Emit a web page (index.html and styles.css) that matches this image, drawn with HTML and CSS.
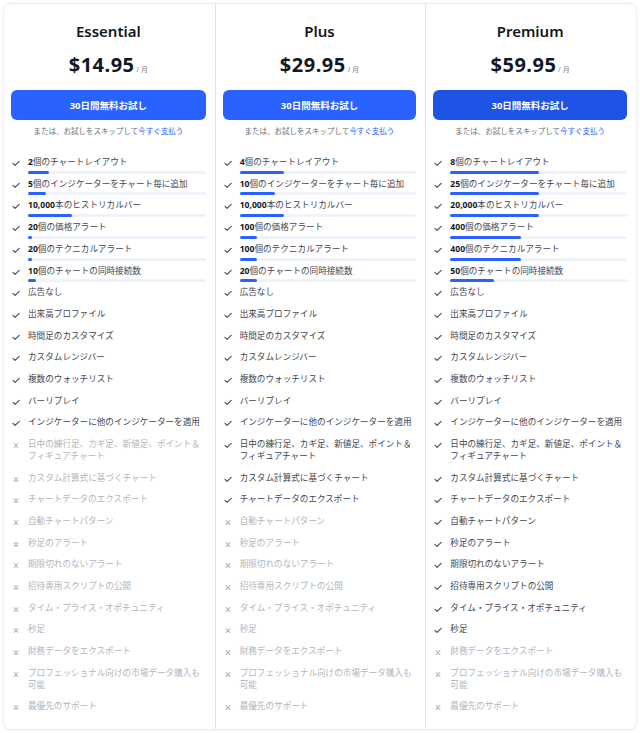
FILE: index.html
```html
<!DOCTYPE html>
<html lang="ja">
<head>
  <meta charset="UTF-8">
  <title>プラン比較</title>
  <link rel="stylesheet" href="styles.css">
</head>
<body>
  <div class="plns_wrp" id="plns"></div>

  <script>
    const ftrs = [
      ["個のチャートレイアウト", true],
      ["個のインジケーターをチャート毎に追加", true],
      ["本のヒストリカルバー", true],
      ["個の価格アラート", true],
      ["個のテクニカルアラート", true],
      ["個のチャートの同時接続数", true],
      ["広告なし"],
      ["出来高プロファイル"],
      ["時間足のカスタマイズ"],
      ["カスタムレンジバー"],
      ["複数のウォッチリスト"],
      ["バーリプレイ"],
      ["インジケーターに他のインジケーターを適用"],
      ["日中の練行足、カギ足、新値足、ポイント＆フィギュアチャート"],
      ["カスタム計算式に基づくチャート"],
      ["チャートデータのエクスポート"],
      ["自動チャートパターン"],
      ["秒足のアラート"],
      ["期限切れのないアラート"],
      ["招待専用スクリプトの公開"],
      ["タイム・プライス・オポチュニティ"],
      ["秒足"],
      ["財務データをエクスポート"],
      ["プロフェッショナル向けの市場データ購入も可能"],
      ["最優先のサポート"]
    ];

    const plns = [
      { nm: "Essential", pr: "$14.95", on: 13, cls: "",
        nums: ["2", "5", "10,000", "20", "20", "10"], pct: [12, 10, 25, 2, 2, 4.5] },
      { nm: "Plus", pr: "$29.95", on: 16, cls: "",
        nums: ["4", "10", "10,000", "100", "100", "20"], pct: [25, 20, 25, 10, 10, 10] },
      { nm: "Premium", pr: "$59.95", on: 22, cls: "btn_dk",
        nums: ["8", "25", "20,000", "400", "400", "50"], pct: [50, 50, 50, 40, 40, 25] }
    ];

    const icOk = '<svg class="ic" viewBox="0 0 10 10"><path d="M2 5.3l2.1 2.1L8.2 3.3" fill="none" stroke="#50535e" stroke-width="1.2" stroke-linecap="round" stroke-linejoin="round"/></svg>';
    const icNo = '<svg class="ic" viewBox="0 0 10 10"><path d="M3.2 3.7l3.6 3.6M6.8 3.7l-3.6 3.6" fill="none" stroke="#b2b5be" stroke-width="1.1" stroke-linecap="round"/></svg>';

    let html = "";
    plns.forEach(p => {
      let li = "";
      ftrs.forEach((f, i) => {
        const ok = i < p.on;
        let tx = f[0];
        if (f[1]) tx = "<b>" + p.nums[i] + "</b>" + tx;
        let bar = "";
        if (f[1]) bar = '<div class="bar"><div class="bar_fl" style="width:' + p.pct[i] + '%"></div></div>';
        li += '<li class="ft' + (ok ? '' : ' ft_off') + (f[1] ? ' ft_br' : '') + '">' +
          (ok ? icOk : icNo) + '<div class="ft_bd"><span class="ft_tx">' + tx + '</span>' + bar + '</div></li>';
      });
      html += '<div class="pln">' +
        '<h2 class="pln_nm">' + p.nm + '</h2>' +
        '<div class="pln_pr">' + p.pr + '<span class="pln_per">/ 月</span></div>' +
        '<button class="btn ' + p.cls + '">30日間無料お試し</button>' +
        '<p class="pln_sk">または、お試しをスキップして<a href="#">今すぐ支払う</a></p>' +
        '<ul class="ft_ls">' + li + '</ul>' +
        '</div>';
    });
    document.getElementById("plns").innerHTML = html;
  </script>
</body>
</html>
```

FILE: styles.css
```css
:root {
  --line: #e0e3eb;
  --txt: #434651;
  --dark: #131722;
  --off: #b2b5be;
  --blue: #2962ff;
  --blue-dk: #1e53e5;
}

* { box-sizing: border-box; }

body {
  margin: 0;
  padding: 3px;
  background: #fff;
  font-family: "Noto Sans", "Noto Sans CJK JP", sans-serif;
  color: var(--txt);
}

.plns_wrp {
  width: 634px;
  border: 1px solid #eceef2;
  border-radius: 8px;
  display: grid;
  grid-template-columns: repeat(3, 1fr);
  box-shadow: 0 1px 3px rgba(0,0,0,0.06);
}

.pln {
  padding: 17px 9px 11px 7px;
  display: flex;
  flex-direction: column;
  align-items: stretch;
}

.pln + .pln { border-left: 1px solid var(--line); }

.pln_nm {
  margin: 0;
  text-align: center;
  font-size: 15px;
  line-height: 20px;
  font-weight: 600;
  color: var(--dark);
}

.pln_pr {
  margin-top: 10px;
  text-align: center;
  font-size: 20px;
  line-height: 28px;
  font-weight: 700;
  letter-spacing: 0.5px;
  color: var(--dark);
}

.pln_per {
  font-size: 7px;
  font-weight: 400;
  letter-spacing: 0;
  color: #787b86;
  margin-left: 2px;
}

.btn {
  margin-top: 6px;
  height: 30px;
  border: none;
  border-radius: 6px;
  background: var(--blue);
  color: #fff;
  font-family: inherit;
  font-size: 9.5px;
  font-weight: 700;
  cursor: pointer;
}

.btn_dk { background: var(--blue-dk); }

.pln_sk {
  margin: 5px 0 0;
  text-align: center;
  font-size: 7.5px;
  line-height: 12px;
  color: #6a6d78;
}

.pln_sk a {
  color: var(--blue);
  text-decoration: none;
}

.ft_ls {
  list-style: none;
  margin: 15px 0 0;
  padding: 0;
}

.ft {
  display: flex;
  align-items: flex-start;
  padding: 5px 0;
  font-size: 8.6px;
  line-height: 11.7px;
}

.ft_br { padding-bottom: 0; }

.ic {
  width: 10px;
  height: 10px;
  flex: none;
  margin: 1px 7px 0 0;
}

.ft_bd { flex: 1; min-width: 0; }

.ft_tx { display: block; }

.ft_tx b {
  font-weight: 700;
  color: var(--dark);
}

.ft_off { color: var(--off); }

.bar {
  margin-top: 2px;
  height: 3px;
  border-radius: 2px;
  background: #f0f3fa;
}

.bar_fl {
  height: 3px;
  border-radius: 2px;
  background: var(--blue);
}
```
